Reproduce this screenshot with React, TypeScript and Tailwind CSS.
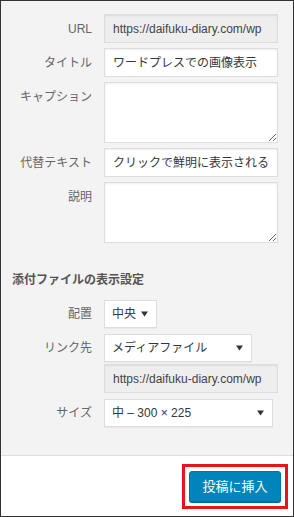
const FONT = "font-['Liberation_Sans','Noto_Sans_CJK_JP',sans-serif]";

function Label({ children, top }: { children: React.ReactNode; top?: boolean }) {
  return (
    <div
      className={`w-[91px] shrink-0 text-right text-[12px] leading-[18px] text-[#666] ${
        top ? "pt-[6px]" : "self-center"
      }`}
    >
      {children}
    </div>
  );
}

function Field({
  label,
  value,
  readOnly,
}: {
  label?: string;
  value: string;
  readOnly?: boolean;
}) {
  return (
    <div className="flex gap-[12px]">
      <Label>{label}</Label>
      <div
        className={`flex h-[29px] w-[174px] items-center overflow-hidden whitespace-nowrap border border-[#ddd] pl-[8px] text-[12px] shadow-[inset_0_1px_2px_rgba(0,0,0,0.07)] ${
          readOnly ? "bg-[#eee] text-[#444]" : "bg-white text-[#32373c]"
        }`}
      >
        {value}
      </div>
    </div>
  );
}

function Area({ label }: { label: string }) {
  return (
    <div className="flex gap-[12px]">
      <Label top>{label}</Label>
      <textarea
        readOnly
        className="block h-[61px] w-[174px] border border-[#ddd] bg-white shadow-[inset_0_1px_2px_rgba(0,0,0,0.07)] outline-none"
      />
    </div>
  );
}

function Select({ label, value, width }: { label: string; value: string; width: string }) {
  return (
    <div className="flex gap-[12px]">
      <Label>{label}</Label>
      <div
        className={`flex h-[28px] ${width} items-center justify-between border border-[#ddd] bg-white pl-[7px] pr-[8px] text-[12px] text-[#32373c] shadow-[0_1px_1px_rgba(0,0,0,0.04)]`}
      >
        <span className="whitespace-nowrap">{value}</span>
        <svg width="7" height="6" viewBox="0 0 7 6">
          <path d="M0 0.5 L7 0.5 L3.5 5.5 Z" fill="#333" />
        </svg>
      </div>
    </div>
  );
}

export default function App() {
  return (
    <div className={`flex h-[517px] w-[294px] flex-col border border-[#333] ${FONT}`}>
      <div className="flex-1 bg-[#f3f3f3] pt-[13px]">
        <div className="flex flex-col gap-[5px]">
          <Field label="URL" value="https://daifuku-diary.com/wp" readOnly />
          <Field label="タイトル" value="ワードプレスでの画像表示" />
          <Area label="キャプション" />
          <Field label="代替テキスト" value="クリックで鮮明に表示される" />
          <Area label="説明" />
        </div>

        <h2 className="mt-[28px] mb-[11px] pl-[11px] text-[12px] font-bold leading-[18px] text-[#555]">
          添付ファイルの表示設定
        </h2>

        <div className="flex flex-col">
          <Select label="配置" value="中央" width="w-[53px]" />
          <div className="mt-[6px]">
            <Select label="リンク先" value="メディアファイル" width="w-[148px]" />
          </div>
          <div className="mt-[2px]">
            <Field value="https://daifuku-diary.com/wp" readOnly />
          </div>
          <div className="mt-[6px]">
            <Select label="サイズ" value="中 – 300 × 225" width="w-[169px]" />
          </div>
        </div>
      </div>

      <div className="flex h-[61px] items-start justify-end border-t border-[#ddd] bg-white pt-[8px] pr-[5px]">
        <div className="border-[3px] border-[#e8141a] p-[4px]">
          <button className="flex h-[31px] w-[92px] items-center justify-center rounded-[3px] border border-[#0073aa] bg-[#0085ba] text-[13px] text-white shadow-[0_1px_0_#006799]">
            投稿に挿入
          </button>
        </div>
      </div>
    </div>
  );
}
